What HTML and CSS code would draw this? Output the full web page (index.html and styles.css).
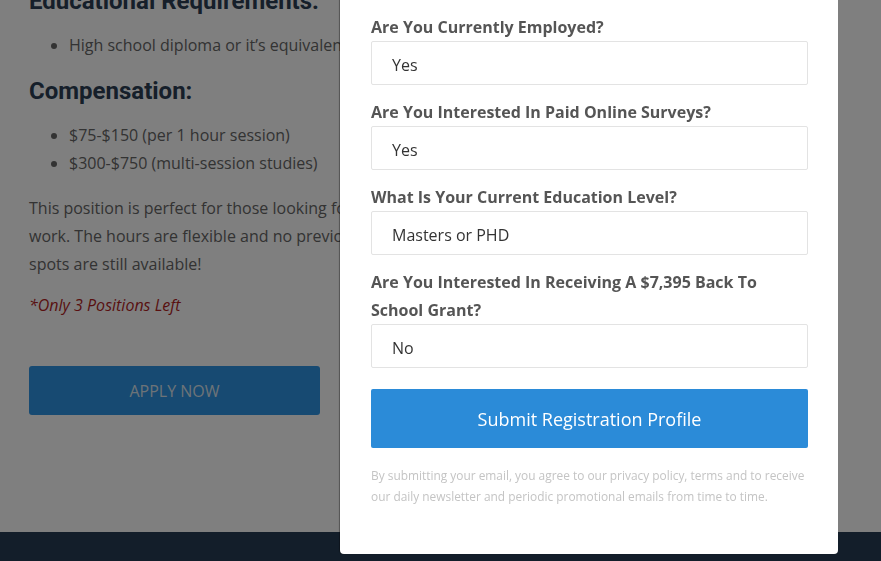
FILE: index.html
```html
<!DOCTYPE html>
<html lang="en">
<head>
    <meta charset="UTF-8">
    <meta name="viewport" content="width=device-width, initial-scale=1.0">
    <title>Paid Research Study Participants</title>
    <link rel="stylesheet" href="styles.css">
</head>
<body>
    <main class="page">
        <section class="job">
            <h2>Educational Requirements:</h2>
            <ul>
                <li>High school diploma or it’s equivalent</li>
            </ul>
            <h2>Compensation:</h2>
            <ul>
                <li>$75-$150 (per 1 hour session)</li>
                <li>$300-$750 (multi-session studies)</li>
            </ul>
            <p>This position is perfect for those looking for flexible part time<br>work. The hours are flexible and no previous experience is required. Only a few<br>spots are still available!</p>
            <p class="left">*Only 3 Positions Left</p>
            <button class="apply">APPLY NOW</button>
        </section>
    </main>

    <footer class="site-footer"></footer>

    <div class="overlay"></div>

    <div class="modal">
        <form class="reg-form">
            <label class="field">
                <span class="label">Email Address</span>
                <input type="text" value="">
            </label>
            <label class="field">
                <span class="label">Are You Currently Employed?</span>
                <input type="text" value="Yes">
            </label>
            <label class="field">
                <span class="label">Are You Interested In Paid Online Surveys?</span>
                <input type="text" value="Yes">
            </label>
            <label class="field">
                <span class="label">What Is Your Current Education Level?</span>
                <input type="text" value="Masters or PHD">
            </label>
            <label class="field">
                <span class="label">Are You Interested In Receiving A $7,395 Back To School Grant?</span>
                <input type="text" value="No">
            </label>
            <button type="button" class="submit">Submit Registration Profile</button>
            <p class="disclaimer">By submitting your email, you agree to our privacy policy, terms and to receive<br>our daily newsletter and periodic promotional emails from time to time.</p>
        </form>
    </div>
</body>
</html>
```

FILE: styles.css
```css
/* Page under the popup */
* { margin: 0; padding: 0; box-sizing: border-box; }
html, body { height: 100%; overflow: hidden; }
body { font-family: "Open Sans", Arial, sans-serif; background: #fff; color: #666; font-size: 16px; }
.page { display: flow-root; height: 532px; padding: 0 29px; }
.job { width: 800px; margin-top: -14px; }
.job h2 { font-family: Roboto, Arial, sans-serif; font-weight: 700; font-size: 24px; line-height: 30px; color: #2c3e55; margin-bottom: 14px; }
.job ul { padding-left: 40px; margin-bottom: 18px; }
.job li { line-height: 28px; }
.job p { line-height: 28px; white-space: nowrap; }
.job h2 + ul li { position: relative; top: 1px; }
.job .left { margin-top: 13px; color: #b21f1f; font-style: italic; }
.apply { display: block; margin-top: 47px; width: 291px; height: 49px; background: #2e94e4; color: #dbe6f0; border: none; border-radius: 3px; font-family: "Open Sans", Arial, sans-serif; font-size: 16px; }
.site-footer { height: 29px; background: #263d55; }

.overlay { position: fixed; inset: 0; background: rgba(0, 0, 0, 0.5); }

/* Registration popup */
.modal { position: fixed; left: 340px; top: -102px; width: 498px; background: #fff; border-radius: 4px; padding: 30px 30px 47px 31px; box-shadow: -1px 0 1px rgba(0, 0, 0, 0.35); }
.reg-form { display: flex; flex-direction: column; }
.field { display: flex; flex-direction: column; margin-bottom: 13px; }
.label { font-weight: 700; font-size: 16px; line-height: 28px; color: #555; }
.field input { height: 44px; border: 1px solid #e3e3e3; border-radius: 2px; padding: 4px 20px 0; font-family: "Open Sans", Arial, sans-serif; font-size: 16px; color: #333; outline: none; }
.reg-form .field:nth-last-of-type(1) { margin-bottom: 21px; }
.submit { height: 59px; background: #2b8bd8; color: #fff; border: none; border-radius: 2px; font-family: "Open Sans", Arial, sans-serif; font-size: 18px; }
.disclaimer { margin-top: 17px; font-size: 11.9px; line-height: 21px; color: #c4c4c4; white-space: nowrap; }
```
